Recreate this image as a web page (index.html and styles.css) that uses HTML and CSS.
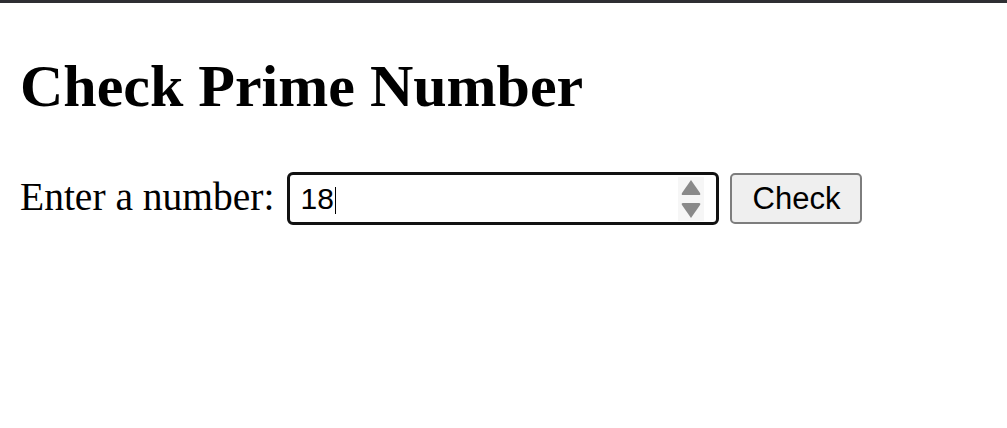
FILE: index.html
```html
<!DOCTYPE html>
<html lang="en">
<head>
<meta charset="utf-8">
<title>Check Prime Number</title>
<link rel="stylesheet" href="styles.css">
</head>
<body>
<div class="topbar"></div>
<main class="page">
  <h1 class="title">Check Prime Number</h1>
  <form class="row">
    <label class="label" for="num">Enter a number:</label>
    <div class="field" id="num">
      <span class="value">18</span><span class="caret"></span>
      <svg class="spin" width="26" height="44" viewBox="0 0 26 44" aria-hidden="true">
        <path d="M13 3 L22 16 Q23 18 21 18 L5 18 Q3 18 4 16 Z" fill="#8a8a8a"/>
        <path d="M13 41 L22 28 Q23 26 21 26 L5 26 Q3 26 4 28 Z" fill="#8a8a8a"/>
      </svg>
    </div>
    <button type="button" class="btn">Check</button>
  </form>
</main>
</body>
</html>
```
FILE: styles.css
```css
html, body {
  margin: 0;
  padding: 0;
  background: #ffffff;
}
.topbar {
  height: 3px;
  background: #2f2f33;
}
.page {
  padding: 49px 0 0 20px;
}
.title {
  margin: 0;
  font-family: "Liberation Serif", "Times New Roman", serif;
  font-weight: bold;
  font-size: 60px;
  line-height: 69px;
  color: #000;
}
.row {
  display: flex;
  align-items: center;
  margin-top: 51px;
}
.label {
  font-family: "Liberation Serif", "Times New Roman", serif;
  font-size: 39.5px;
  line-height: 46px;
  color: #000;
  margin-bottom: 4px;
  margin-right: 13px;
}
.field {
  box-sizing: border-box;
  width: 432px;
  height: 53px;
  border: 3px solid #111;
  border-radius: 6px;
  display: flex;
  align-items: center;
  padding-left: 10px;
  padding-right: 12px;
  background: #fff;
}
.value {
  font-family: "Liberation Sans", Arial, sans-serif;
  font-size: 30px;
  color: #000;
  line-height: 34px;
}
.caret {
  width: 1px;
  height: 27px;
  background: #000;
  margin-left: 1px;
  margin-top: 3px;
}
.spin {
  margin-left: auto;
  background: #f6f6f6;
}
.btn {
  box-sizing: border-box;
  width: 132px;
  height: 51px;
  margin-left: 11px;
  border: 2px solid #7d7d7d;
  border-radius: 5px;
  background: #efefef;
  font-family: "Liberation Sans", Arial, sans-serif;
  font-size: 31px;
  color: #000;
  padding: 0;
}
```
